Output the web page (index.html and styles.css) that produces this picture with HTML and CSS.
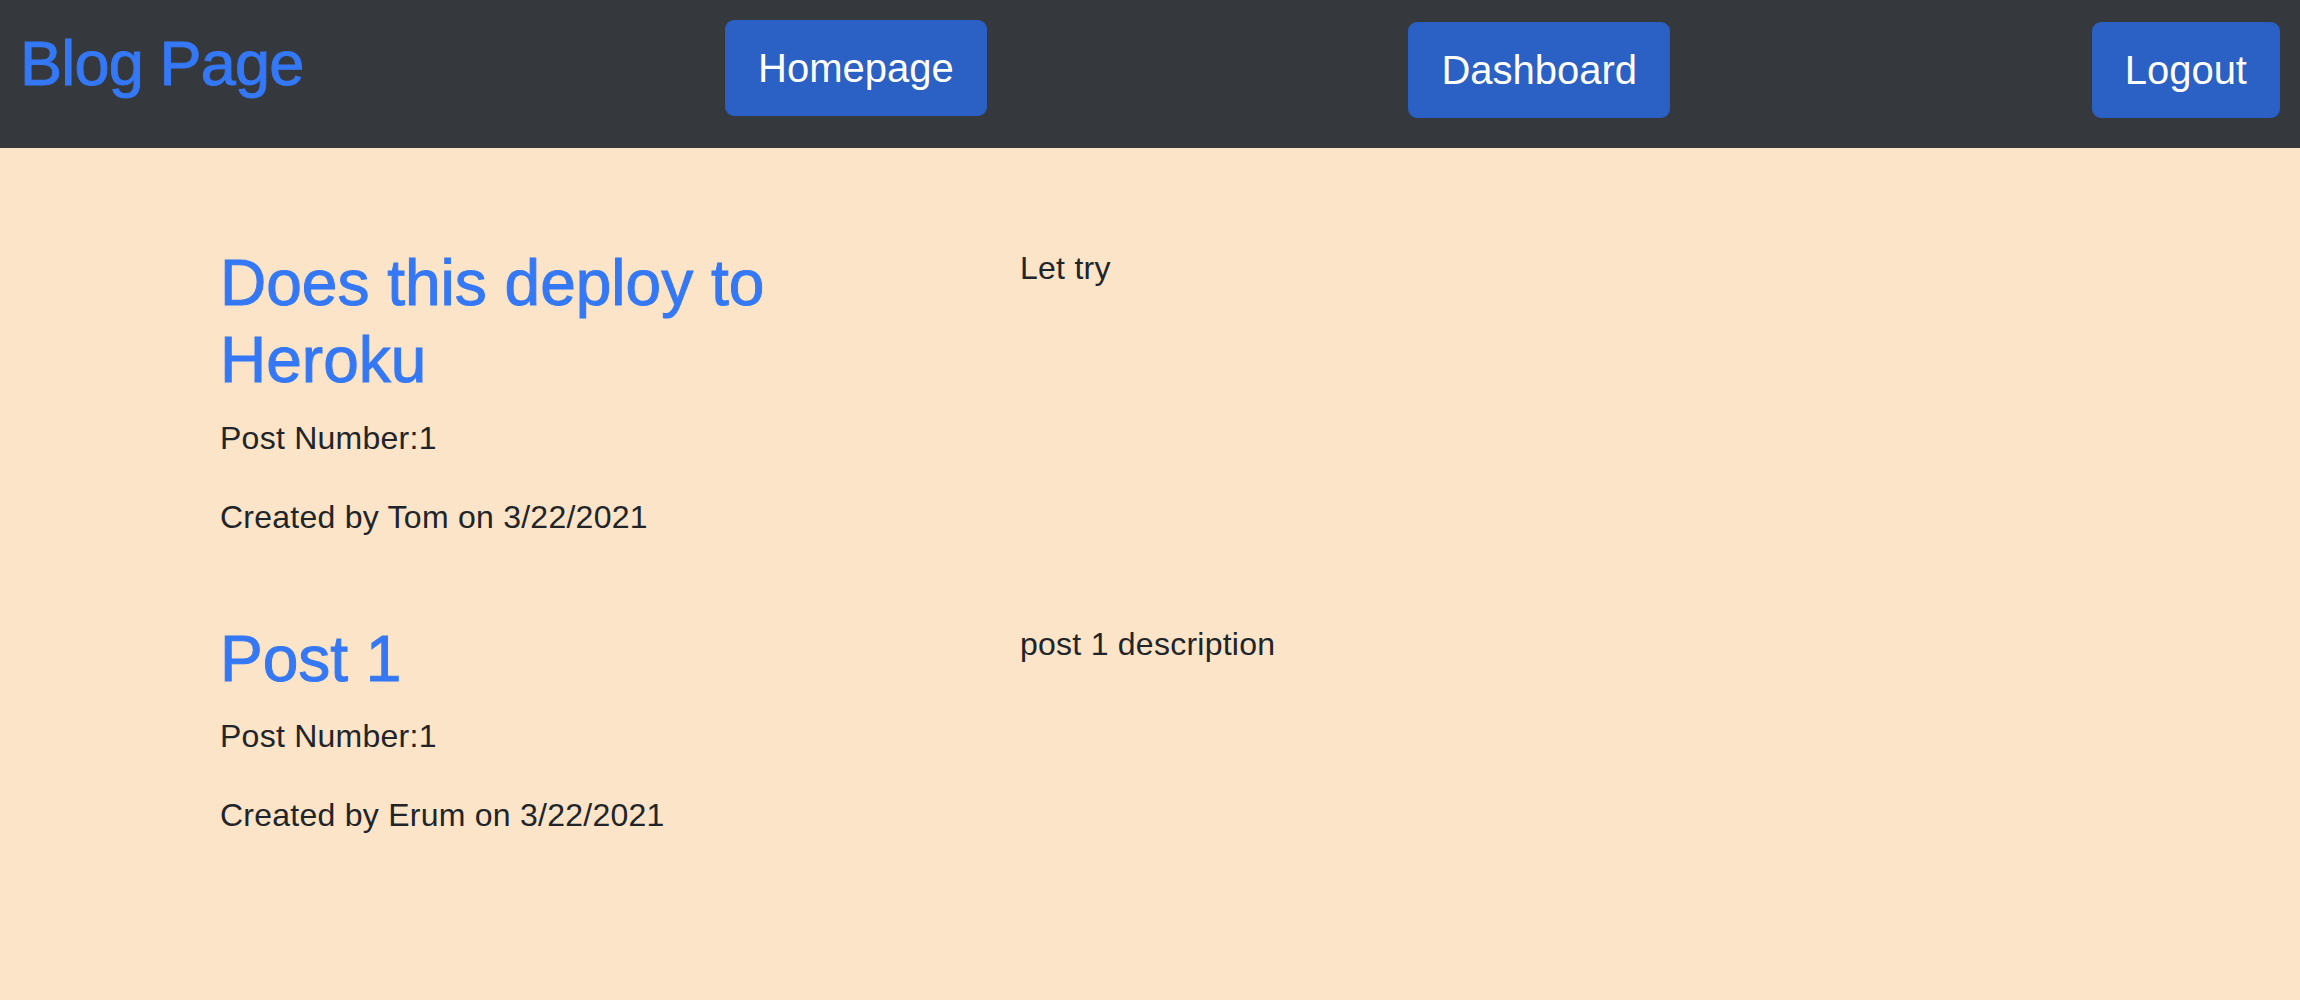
FILE: index.html
```html
<!DOCTYPE html>
<html lang="en">
<head>
<meta charset="utf-8">
<title>Blog Page</title>
<link rel="stylesheet" href="styles.css">
</head>
<body>
<nav class="navbar">
  <a class="brand" href="#">Blog Page</a>
  <a class="btn" href="#">Homepage</a>
  <a class="btn btn-low" href="#">Dashboard</a>
  <a class="btn btn-low" href="#">Logout</a>
</nav>
<main class="container">
  <article class="post">
    <div class="col-main">
      <h2 class="post-title">Does this deploy to Heroku</h2>
      <p class="meta">Post Number:1</p>
      <p class="meta">Created by Tom on 3/22/2021</p>
    </div>
    <div class="col-desc">
      <p class="desc">Let try</p>
    </div>
  </article>
  <article class="post">
    <div class="col-main">
      <h2 class="post-title">Post 1</h2>
      <p class="meta">Post Number:1</p>
      <p class="meta">Created by Erum on 3/22/2021</p>
    </div>
    <div class="col-desc">
      <p class="desc">post 1 description</p>
    </div>
  </article>
</main>
</body>
</html>
```
FILE: styles.css
```css
html, body {
  margin: 0;
  padding: 0;
  background: #fbe4c7;
}

body {
  font-family: "Liberation Sans", Arial, sans-serif;
  font-size: 32px;
  line-height: 1.5;
  color: #212529;
  min-height: 1000px;
}

.navbar {
  box-sizing: border-box;
  height: 148px;
  background: #35393e;
  display: flex;
  justify-content: space-between;
  align-items: flex-start;
  padding: 20px 20px 0 20px;
}

.brand {
  display: block;
  margin-top: 6px;
  font-size: 63px;
  line-height: 1.2;
  letter-spacing: -0.8px;
  color: #3478f6;
  -webkit-text-stroke: 1px #3478f6;
  text-decoration: none;
}

.btn {
  display: block;
  font-size: 40px;
  line-height: 60px;
  padding: 16px 31px;
  border: 2px solid #2a5fc3;
  border-radius: 9px;
  background: #2b60c5;
  color: #ffffff;
  text-decoration: none;
}

.btn-low {
  margin-top: 2px;
}

.container {
  width: 1920px;
  margin: 0 auto;
  padding-top: 97px;
  display: flex;
  flex-direction: column;
  gap: 49px;
}

.post {
  display: flex;
  align-items: flex-start;
}

.col-main {
  box-sizing: border-box;
  width: 800px;
  padding: 0 30px;
}

.col-desc {
  box-sizing: border-box;
  flex: 1;
  padding: 0 30px;
}

.post-title {
  margin: 0 0 15px 0;
  font-size: 64px;
  line-height: 1.2;
  font-weight: normal;
  color: #3478f6;
  -webkit-text-stroke: 1px #3478f6;
}

.meta,
.desc {
  margin: 0 0 31px 0;
  letter-spacing: 0.25px;
}

.desc {
  margin-top: -1px;
}
```
